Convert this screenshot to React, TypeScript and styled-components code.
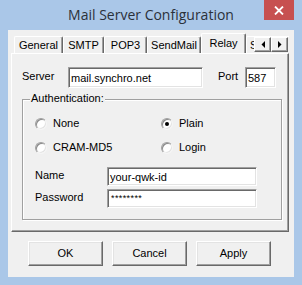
import React from 'react';
import styled, { createGlobalStyle } from 'styled-components';

const GlobalStyle = createGlobalStyle`
  html, body {
    margin: 0;
    padding: 0;
  }

  body {
    width: 302px;
    height: 285px;
    overflow: hidden;
    font-family: "Liberation Sans", Arial, sans-serif;
    font-size: 11px;
    color: #000;
  }
`;

const Window = styled.div`
  box-sizing: border-box;
  width: 302px;
  height: 285px;
  background-color: #aac7e8;

  display: flex;
  flex-direction: column;
`;

const TitleBar = styled.div`
  height: 30px;
  flex: none;

  display: grid;
  grid-template-columns: 1fr auto 1fr;
`;

const Title = styled.span`
  grid-column: 2;
  align-self: center;
  padding-bottom: 1px;

  font-family: "Open Sans", "Liberation Sans", sans-serif;
  font-size: 14px;
  color: #2b313a;
  white-space: nowrap;
`;

const CloseButton = styled.div`
  grid-column: 3;
  justify-self: end;
  align-self: start;
  margin-right: 8px;

  width: 30px;
  height: 20px;
  background-color: #c75050;

  display: flex;
  justify-content: center;
  align-items: center;
`;

const Client = styled.div`
  flex: 1;
  margin: 0 8px 8px 8px;
  padding: 1px 0 0 3px;
  background-color: #f0f0f0;

  display: flex;
  flex-direction: column;
`;

const TabControl = styled.div`
  position: relative;
  width: 278px;
`;

const TabStrip = styled.div`
  height: 22px;
  padding-left: 3px;
  overflow: hidden;

  display: flex;
  align-items: flex-end;
`;

const Tab = styled.div<{ $width: number; $selected?: boolean; $clipped?: boolean }>`
  flex: none;
  box-sizing: border-box;
  width: ${(p) => p.$width}px;
  height: ${(p) => (p.$selected ? 21 : 17)}px;
  margin-bottom: ${(p) => (p.$selected ? -1 : 0)}px;
  position: relative;
  z-index: ${(p) => (p.$selected ? 1 : 0)};

  background-color: #f0f0f0;
  border-top: 1px solid #fff;
  border-left: 1px solid #fff;
  border-right: 1px solid #696969;
  border-radius: 2px 2px 0 0;
  box-shadow: inset -1px 0 #a0a0a0;

  display: flex;
  justify-content: ${(p) => (p.$clipped ? 'flex-start' : 'center')};
  padding-left: ${(p) => (p.$clipped ? 3 : 0)}px;
  padding-top: ${(p) => (p.$selected ? 3 : 2)}px;
  white-space: nowrap;
  overflow: hidden;
  font-size: 11px;
`;

const ScrollArrows = styled.div`
  position: absolute;
  top: 6px;
  left: 243px;
  display: flex;
`;

const ArrowButton = styled.div`
  box-sizing: border-box;
  width: 17px;
  height: 15px;
  background-color: #f0f0f0;
  border-top: 1px solid #fff;
  border-left: 1px solid #fff;
  border-right: 1px solid #696969;
  border-bottom: 1px solid #696969;
  box-shadow: inset -1px -1px #a0a0a0;

  display: flex;
  justify-content: center;
  align-items: center;
`;

const Panel = styled.div`
  box-sizing: border-box;
  height: 179px;
  padding: 13px 0 0 10px;

  background-color: #f0f0f0;
  border-top: 1px solid #fff;
  border-left: 1px solid #fff;
  border-right: 1px solid #696969;
  border-bottom: 1px solid #696969;
  box-shadow: inset -1px -1px #a0a0a0;
`;

const Row = styled.div<{ $top?: number }>`
  display: flex;
  align-items: center;
  margin-top: ${(p) => p.$top ?? 0}px;
`;

const Label = styled.span<{ $width: number; $left?: number }>`
  flex: none;
  width: ${(p) => p.$width}px;
  margin-left: ${(p) => p.$left ?? 0}px;
  padding-bottom: 3px;
  white-space: nowrap;
`;

const TextBox = styled.div<{ $width: number; $height: number }>`
  flex: none;
  box-sizing: border-box;
  width: ${(p) => p.$width}px;
  height: ${(p) => p.$height}px;
  padding: 1px 0 0 2px;

  background-color: #fff;
  border-top: 1px solid #a0a0a0;
  border-left: 1px solid #a0a0a0;
  border-right: 1px solid #fff;
  border-bottom: 1px solid #fff;
  box-shadow: inset 1px 1px #696969, inset -1px -1px #e3e3e3;

  display: flex;
  align-items: center;
  white-space: nowrap;
  overflow: hidden;
`;

const Masked = styled.span`
  font-size: 9px;
  letter-spacing: 0.4px;
  padding: 0 0 3px 1px;
`;

const GroupBox = styled.div`
  position: relative;
  box-sizing: border-box;
  width: 260px;
  height: 121px;
  margin-top: 11px;
  padding: 17px 0 0 12px;

  border: 1px solid #a0a0a0;
  box-shadow: inset 1px 1px #fff, 1px 1px #fff;
`;

const GroupLegend = styled.span`
  position: absolute;
  top: -8px;
  left: 7px;
  padding: 0 1px;
  background-color: #f0f0f0;
`;

const RadioGrid = styled.div`
  display: grid;
  grid-template-columns: 126px 1fr;
  row-gap: 11px;
`;

const RadioOption = styled.div`
  height: 13px;
  display: flex;
  align-items: center;
`;

const RadioCircle = styled.span<{ $checked?: boolean }>`
  flex: none;
  box-sizing: border-box;
  width: 12px;
  height: 12px;
  margin-right: 6px;
  border-radius: 50%;

  background-color: #fff;
  border: 1px solid;
  border-color: #a0a0a0 #f4f4f4 #f4f4f4 #a0a0a0;
  box-shadow: inset 1px 1px #8a8a8a, inset -1px -1px #e3e3e3;

  display: flex;
  justify-content: center;
  align-items: center;

  &::after {
    content: '';
    display: ${(p) => (p.$checked ? 'block' : 'none')};
    width: 4px;
    height: 4px;
    border-radius: 50%;
    background-color: #000;
  }
`;

const RadioText = styled.span`
  padding-bottom: 2px;
`;

const ButtonRow = styled.div`
  display: flex;
  gap: 9px;
  margin-top: 9px;
  padding-left: 17px;
`;

const Button = styled.div`
  box-sizing: border-box;
  width: 75px;
  height: 25px;

  background-color: #f0f0f0;
  border-top: 1px solid #fff;
  border-left: 1px solid #fff;
  border-right: 1px solid #696969;
  border-bottom: 1px solid #696969;
  box-shadow: inset -1px -1px #a0a0a0, inset 1px 1px #e3e3e3;

  display: flex;
  justify-content: center;
  align-items: center;
  padding-bottom: 2px;
`;

const tabs = [
  { label: 'General', width: 49 },
  { label: 'SMTP', width: 41 },
  { label: 'POP3', width: 43 },
  { label: 'SendMail', width: 54 },
  { label: 'Relay', width: 45, selected: true },
  { label: 'S', width: 50, clipped: true },
];

function App() {
  return (
    <>
      <GlobalStyle />
      <Window>
        <TitleBar>
          <Title>Mail Server Configuration</Title>
          <CloseButton>
            <svg width="10" height="9" viewBox="0 0 10 9">
              <path d="M1 0.5 L9 8.5 M9 0.5 L1 8.5" stroke="#fff" strokeWidth="1.8" />
            </svg>
          </CloseButton>
        </TitleBar>
        <Client>
          <TabControl>
            <TabStrip>
              {tabs.map((t) => (
                <Tab
                  key={t.label}
                  $width={t.width}
                  $selected={t.selected}
                  $clipped={t.clipped}
                >
                  {t.label}
                </Tab>
              ))}
            </TabStrip>
            <ScrollArrows>
              <ArrowButton>
                <svg width="4" height="7" viewBox="0 0 4 7">
                  <polygon points="4,0 4,7 0.5,3.5" fill="#000" />
                </svg>
              </ArrowButton>
              <ArrowButton>
                <svg width="4" height="7" viewBox="0 0 4 7">
                  <polygon points="0,0 0,7 3.5,3.5" fill="#000" />
                </svg>
              </ArrowButton>
            </ScrollArrows>
            <Panel>
              <Row>
                <Label $width={46}>Server</Label>
                <TextBox $width={135} $height={21}>mail.synchro.net</TextBox>
                <Label $width={27} $left={15}>Port</Label>
                <TextBox $width={31} $height={21}>587</TextBox>
              </Row>
              <GroupBox>
                <GroupLegend>Authentication:</GroupLegend>
                <RadioGrid>
                  <RadioOption>
                    <RadioCircle />
                    <RadioText>None</RadioText>
                  </RadioOption>
                  <RadioOption>
                    <RadioCircle $checked />
                    <RadioText>Plain</RadioText>
                  </RadioOption>
                  <RadioOption>
                    <RadioCircle />
                    <RadioText>CRAM-MD5</RadioText>
                  </RadioOption>
                  <RadioOption>
                    <RadioCircle />
                    <RadioText>Login</RadioText>
                  </RadioOption>
                </RadioGrid>
                <Row $top={13}>
                  <Label $width={72}>Name</Label>
                  <TextBox $width={150} $height={19}>your-qwk-id</TextBox>
                </Row>
                <Row $top={3}>
                  <Label $width={72}>Password</Label>
                  <TextBox $width={150} $height={19}>
                    <Masked>********</Masked>
                  </TextBox>
                </Row>
              </GroupBox>
            </Panel>
          </TabControl>
          <ButtonRow>
            <Button>OK</Button>
            <Button>Cancel</Button>
            <Button>Apply</Button>
          </ButtonRow>
        </Client>
      </Window>
    </>
  );
}

export default App;
